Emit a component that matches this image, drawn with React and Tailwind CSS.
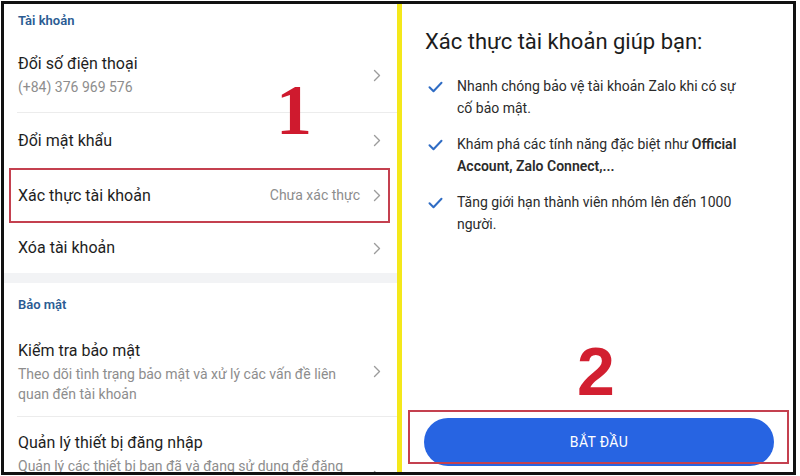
import React from 'react';

const Chevron = () => (
  <svg width="8" height="13" viewBox="0 0 8 13" fill="none" className="shrink-0">
    <path d="M1.5 1.5l5 5-5 5" stroke="#9c9c9c" strokeWidth="1.4" strokeLinecap="round" strokeLinejoin="round" />
  </svg>
);

const Check = () => (
  <svg width="15" height="12" viewBox="0 0 15 12" fill="none" className="shrink-0 mt-[6px]">
    <path d="M1.5 6.2l4 4L13.5 1.8" stroke="#2f6cc4" strokeWidth="2" strokeLinecap="round" strokeLinejoin="round" />
  </svg>
);

const SectionHeader = ({ label, className = '' }) => (
  <div className={`flex items-center pl-[14px] text-[13px] font-semibold text-[#2b5c93] ${className}`}>
    {label}
  </div>
);

const Row = ({ title, subtitle, value, className = '', children }) => (
  <div className={`relative flex items-center pl-[14px] pr-[16px] ${className}`}>
    <div className="flex-1 flex flex-col gap-[2px] min-w-0">
      <div className="text-[16px] leading-[22px] text-[#1e1e1e]">{title}</div>
      {subtitle && <div className="text-[14px] leading-[20px] text-[#8d8d8d]">{subtitle}</div>}
    </div>
    {value && <span className="text-[14px] text-[#8d8d8d] mr-[13px]">{value}</span>}
    <Chevron />
    {children}
  </div>
);

const benefits = [
  { lines: ['Nhanh chóng bảo vệ tài khoản Zalo khi có sự', 'cố bảo mật.'] },
  {
    lines: [
      <>Khám phá các tính năng đặc biệt như <b className="font-semibold">Official</b></>,
      <b className="font-semibold">Account, Zalo Connect,...</b>,
    ],
  },
  { lines: ['Tăng giới hạn thành viên nhóm lên đến 1000', 'người.'] },
];

export default function App() {
  return (
    <div className="w-[800px] h-[476px] bg-white pt-px pl-px overflow-hidden font-['Roboto',sans-serif]">
      <div className="w-[795px] h-[474px] border-[3px] border-[#111] flex overflow-hidden">
        {/* left: account settings */}
        <div className="w-[393px] relative overflow-hidden bg-white">
          <SectionHeader label="Tài khoản" className="h-[34px]" />
          <div className="ml-[13px] border-b border-[#ececec]">
            <Row title="Đổi số điện thoại" subtitle="(+84) 376 969 576" className="h-[74px] -ml-[13px]" />
          </div>
          <Row title="Đổi mật khẩu" className="h-[55px]" />
          <Row title="Xác thực tài khoản" value="Chưa xác thực" className="h-[55px]">
            <div className="absolute left-[5px] right-[7px] top-0 bottom-0 border-2 border-[#c4404f]" />
          </Row>
          <Row title="Xóa tài khoản" className="h-[50px]" />
          <div className="h-[10px] bg-[#f2f3f5]" />
          <SectionHeader label="Bảo mật" className="h-[44px]" />
          <div className="ml-[13px] border-b border-[#ececec]">
            <Row
              title="Kiểm tra bảo mật"
              subtitle={<>Theo dõi tình trạng bảo mật và xử lý các vấn đề liên<br />quan đến tài khoản</>}
              className="h-[89px] -ml-[13px]"
            />
          </div>
          <div className="flex items-start pl-[14px] pr-[16px] pt-[15px]">
            <div className="flex-1 flex flex-col gap-[2px]">
              <div className="text-[16px] leading-[22px] text-[#1e1e1e]">Quản lý thiết bị đăng nhập</div>
              <div className="text-[14px] leading-[20px] text-[#8d8d8d] whitespace-nowrap">
                Quản lý các thiết bị bạn đã và đang sử dụng để đăng
              </div>
            </div>
            <div className="mt-[38px]"><Chevron /></div>
          </div>
          <div className="absolute left-[272px] top-[70px] text-[72px] leading-none font-bold text-[#cf1a2e] font-['Liberation_Serif',serif]">
            1
          </div>
        </div>

        <div className="w-[5px] bg-[#f4e81a]" />

        {/* right: verification intro */}
        <div className="flex-1 relative flex flex-col bg-white">
          <h1 className="mt-[24px] ml-[23px] text-[22px] leading-[28px] text-[#1c1c1c]">
            Xác thực tài khoản giúp bạn:
          </h1>
          <ul className="mt-[19px] ml-[26px] flex flex-col gap-[14px]">
            {benefits.map((b, i) => (
              <li key={i} className="flex gap-[14px]">
                <Check />
                <div className="text-[14px] leading-[22px] text-[#2b2b2b]">
                  {b.lines[0]}
                  <br />
                  {b.lines[1]}
                </div>
              </li>
            ))}
          </ul>
          <div className="flex-1" />
          <button className="ml-[22px] mb-[6px] w-[350px] h-[48px] rounded-full bg-[#2764e2] text-white text-[14px] tracking-wide">
            BẮT ĐẦU
          </button>
          <div className="absolute left-[6px] top-[406px] w-[381px] h-[54px] border-2 border-[#c4404f]" />
          <div className="absolute left-[175px] top-[333px] text-[68px] leading-none font-bold text-[#d21f30] font-['Liberation_Sans',sans-serif]">
            2
          </div>
        </div>
      </div>
    </div>
  );
}
